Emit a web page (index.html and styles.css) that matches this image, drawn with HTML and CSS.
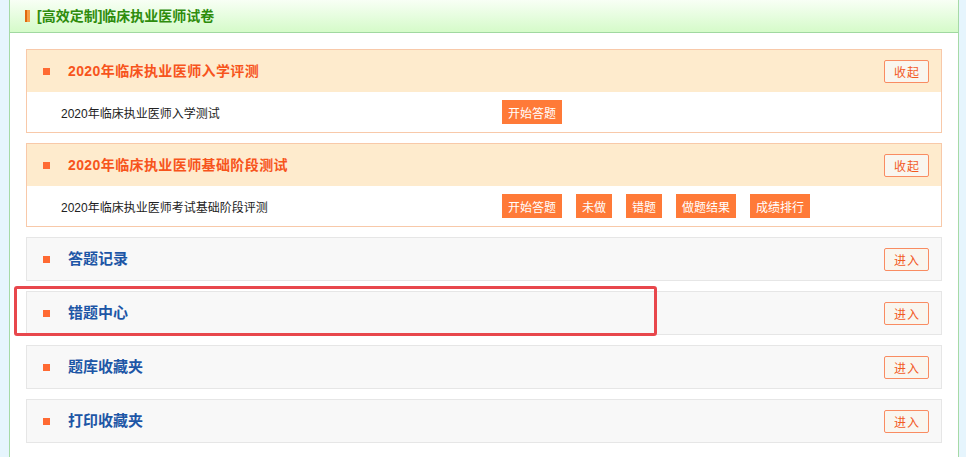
FILE: index.html
```html
<!DOCTYPE html>
<html lang="zh-CN">
<head>
<meta charset="utf-8">
<title>高效定制</title>
<link rel="stylesheet" href="styles.css">
</head>
<body>
<div class="panel">
  <div class="panel-head">
    <span class="head-bar"></span>
    <span class="head-title">[高效定制]临床执业医师试卷</span>
  </div>
  <div class="panel-body">
    <div class="box box-open">
      <div class="box-head">
        <span class="bullet"></span>
        <span class="box-title title-orange">2020年临床执业医师入学评测</span>
        <a class="btn-line">收起</a>
      </div>
      <div class="box-row">
        <span class="row-label">2020年临床执业医师入学测试</span>
        <div class="row-actions">
          <a class="btn-fill">开始答题</a>
        </div>
      </div>
    </div>

    <div class="box box-open">
      <div class="box-head">
        <span class="bullet"></span>
        <span class="box-title title-orange">2020年临床执业医师基础阶段测试</span>
        <a class="btn-line">收起</a>
      </div>
      <div class="box-row">
        <span class="row-label">2020年临床执业医师考试基础阶段评测</span>
        <div class="row-actions">
          <a class="btn-fill">开始答题</a>
          <a class="btn-fill">未做</a>
          <a class="btn-fill">错题</a>
          <a class="btn-fill">做题结果</a>
          <a class="btn-fill">成绩排行</a>
        </div>
      </div>
    </div>

    <div class="box box-grey">
      <div class="box-head">
        <span class="bullet"></span>
        <span class="box-title title-blue">答题记录</span>
        <a class="btn-line">进入</a>
      </div>
    </div>

    <div class="box box-grey box-marked">
      <div class="box-head">
        <span class="bullet"></span>
        <span class="box-title title-blue">错题中心</span>
        <a class="btn-line">进入</a>
      </div>
      <div class="mark"></div>
    </div>

    <div class="box box-grey">
      <div class="box-head">
        <span class="bullet"></span>
        <span class="box-title title-blue">题库收藏夹</span>
        <a class="btn-line">进入</a>
      </div>
    </div>

    <div class="box box-grey">
      <div class="box-head">
        <span class="bullet"></span>
        <span class="box-title title-blue">打印收藏夹</span>
        <a class="btn-line">进入</a>
      </div>
    </div>
  </div>
</div>
</body>
</html>
```

FILE: styles.css
```css
html, body {
  margin: 0;
  padding: 0;
  background: #e6f5fd;
  height: 100%;
}

body {
  font-family: "Liberation Sans", "Noto Sans CJK SC", sans-serif;
  font-size: 12px;
  color: #333;
}

.panel {
  box-sizing: border-box;
  width: 950px;
  min-height: 100%;
  margin-left: 9px;
  background: #fff;
  border-left: 1px solid #a6daa6;
  border-right: 1px solid #a6daa6;
}

.panel-head {
  height: 32px;
  border-bottom: 1px solid #a0d8a0;
  background: linear-gradient(#f8fff5, #d5fbc9);
  display: flex;
  align-items: center;
  padding-left: 15px;
}

.head-bar {
  width: 5px;
  height: 12px;
  background: linear-gradient(90deg, #e0690f 0 50%, #f6a14a 50% 100%);
  margin-right: 7px;
}

.head-title {
  font-size: 14px;
  font-weight: bold;
  color: #2e8c0c;
  line-height: 16px;
}

.panel-body {
  padding: 16px;
  display: flex;
  flex-direction: column;
  gap: 10px;
}

.box {
  border: 1px solid #f8c9a9;
  position: relative;
}

.box-open .box-head {
  background: #feebcd;
}

.box-grey {
  border-color: #e6e6e6;
  background: #f8f8f8;
}

.box-head {
  height: 42px;
  display: flex;
  align-items: center;
  padding: 0 12px 0 16px;
}

.bullet {
  width: 7px;
  height: 7px;
  background: #ff6a33;
  margin-right: 18px;
  flex: none;
}

.box-title {
  font-size: 15px;
  font-weight: bold;
  flex: 1;
  line-height: 18px;
}

.title-orange {
  color: #f7541c;
  font-size: 14px;
  letter-spacing: 0.4px;
}

.title-blue {
  color: #1d56a6;
}

.btn-line {
  box-sizing: border-box;
  width: 45px;
  height: 23px;
  border: 1px solid #f98c62;
  border-radius: 2px;
  background: #f9f6ef;
  color: #f25a1f;
  font-size: 12px;
  display: flex;
  align-items: center;
  justify-content: center;
  letter-spacing: 1px;
  text-indent: 1px;
}

.box-row {
  height: 40px;
  display: flex;
  align-items: center;
  padding-left: 34px;
  background: #fff;
}

.row-label {
  width: 441px;
  flex: none;
  font-size: 12px;
  color: #222;
}

.row-actions {
  display: flex;
  gap: 14px;
}

.btn-fill {
  height: 24px;
  padding: 0 6px;
  background: #ff7a38;
  color: #fff;
  font-size: 12px;
  display: flex;
  align-items: center;
}

.mark {
  position: absolute;
  left: -13px;
  top: -6px;
  width: 637px;
  height: 44px;
  border: 3px solid #e8474c;
  border-radius: 3px;
  pointer-events: none;
}
```
